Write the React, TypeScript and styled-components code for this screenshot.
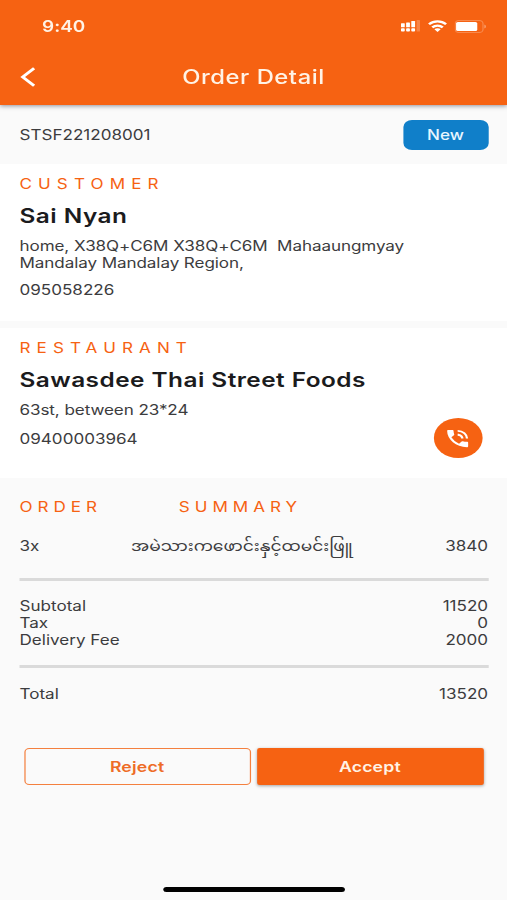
import React from "react";
import styled, { createGlobalStyle } from "styled-components";
import { MdPhoneInTalk } from "react-icons/md";

const ORANGE = "#f66212";

const GlobalStyle = createGlobalStyle`
  * { box-sizing: border-box; }
  html, body { margin: 0; background: #fafafa; overflow: hidden; }
`;

/* The phone canvas is laid out at 416px and widened to fill the viewport. */
const Viewport = styled.div`
  width: 507px;
  height: 900px;
  overflow: hidden;
`;

const Screen = styled.div`
  display: flex;
  flex-direction: column;
  width: 416px;
  height: 900px;
  transform: scaleX(1.21875);
  transform-origin: 0 0;
  background: #fafafa;
  color: #3c3c3e;
  font-family: Inter, "Noto Sans Myanmar", "Noto Sans", sans-serif;
  font-size: 14px;
  font-feature-settings: "calt" 0;
  line-height: 17px;
  white-space: pre;
`;

const Header = styled.header`
  flex: none;
  height: 105px;
  background: ${ORANGE};
  color: #fff3e6;
  box-shadow: 0 1px 4px rgba(40, 40, 60, 0.5);
  z-index: 1;
`;

const StatusBar = styled.div`
  display: flex;
  align-items: center;
  justify-content: space-between;
  height: 52px;
  padding: 0 17px 0 34.5px;
`;

const Time = styled.span`
  font-size: 15.5px;
  font-weight: 600;
`;

const StatusIcons = styled.div`
  display: flex;
  align-items: center;
  gap: 6px;
`;

const NavBar = styled.div`
  display: grid;
  grid-template-columns: 48px 1fr 48px;
  align-items: center;
  height: 50px;
`;

const BackButton = styled.button`
  display: flex;
  padding: 0 0 0 16px;
  border: 0;
  background: none;
  color: inherit;
`;

const Title = styled.h1`
  margin: 0;
  font-size: 19.5px;
  font-weight: 500;
  line-height: 24px;
  letter-spacing: 0.45px;
  text-align: center;
`;

const OrderBar = styled.div`
  display: flex;
  flex: none;
  align-items: center;
  justify-content: space-between;
  height: 59px;
  padding: 0 15.5px 0 16px;
`;

const StatusTag = styled.span`
  width: 70px;
  height: 30px;
  border-radius: 7px;
  background: #107fc9;
  color: #e8f6ff;
  font-weight: 500;
  line-height: 30px;
  text-align: center;
`;

const Party = styled.section<{ $height: number; $gap: number }>`
  display: flex;
  flex: none;
  flex-direction: column;
  height: ${(p) => p.$height}px;
  margin-bottom: ${(p) => p.$gap}px;
  padding: 11px 15.5px 0 16px;
  background: #fff;
`;

const Eyebrow = styled.h2<{ $tight?: boolean }>`
  margin: 0;
  color: ${ORANGE};
  font-size: 14px;
  font-weight: 400;
  line-height: 17px;
  letter-spacing: ${(p) => (p.$tight ? 4.1 : 5)}px;
  word-spacing: 54.9px;
`;

const Name = styled.h3`
  margin: 12px 0 9px;
  color: #1b1b1d;
  font-size: 20px;
  font-weight: 600;
  line-height: 24px;
  letter-spacing: 0.38px;
`;

const Line = styled.p`
  margin: 0;
  letter-spacing: -0.07px;
`;

const Contact = styled.div`
  display: flex;
  align-items: center;
  justify-content: space-between;
  height: 40px;
  padding-right: 5px;
`;

const PhoneLine = styled.p`
  margin: 10px 0 0;
`;

const CallButton = styled.button`
  display: grid;
  place-items: center;
  width: 40px;
  height: 40px;
  padding: 0;
  border: 0;
  border-radius: 50%;
  background: ${ORANGE};
  color: #fff;
`;

const Summary = styled.section`
  display: flex;
  flex-direction: column;
  padding: 20px 15.5px 0 16px;
`;

const ItemRow = styled.div`
  display: grid;
  grid-template-columns: 91.5px 1fr auto;
  align-items: center;
  height: 34px;
  margin: 13px 0 16px;
`;

const Divider = styled.hr`
  width: 100%;
  height: 3px;
  margin: 0;
  border: 0;
  background: #dadada;
`;

const Totals = styled.div<{ $top: number; $bottom: number }>`
  padding: ${(p) => p.$top}px 0 ${(p) => p.$bottom}px;
`;

const AmountRow = styled.div`
  display: flex;
  justify-content: space-between;
`;

const Actions = styled.div`
  display: flex;
  flex: none;
  gap: 5px;
  margin-top: 46px;
  padding: 0 19.5px;
`;

const ActionButton = styled.button<{ $filled?: boolean }>`
  flex: 1 1 50%;
  height: 37px;
  padding: 0;
  border: ${(p) => (p.$filled ? "0" : "1px solid #f4803f")};
  border-radius: ${(p) => (p.$filled ? 2 : 4)}px;
  background: ${(p) => (p.$filled ? ORANGE : "transparent")};
  box-shadow: ${(p) => (p.$filled ? "0 1px 3px rgba(0,0,0,.35)" : "none")};
  color: ${(p) => (p.$filled ? "#fff3e6" : "#ee6c26")};
  font: 600 14.5px/17px Inter, sans-serif;
  letter-spacing: 0.15px;
`;

const HomeIndicator = styled.div`
  flex: none;
  width: 149px;
  height: 5px;
  margin: auto auto 8px;
  border-radius: 3px;
  background: #000;
`;

const Signal = () => (
  <svg width="16" height="12" viewBox="0 0 17 12" fill="#fff" preserveAspectRatio="none">
    <rect x="0" y="3.3" width="3.3" height="4" rx=".5" />
    <rect x="0" y="8.3" width="3.3" height="3.3" rx=".8" />
    <rect x="4.5" y="2.4" width="3.3" height="4.9" rx=".5" />
    <rect x="4.5" y="8.3" width="3.3" height="3.3" rx=".8" />
    <rect x="9" y="1" width="3.3" height="6.3" rx=".5" />
    <rect x="9" y="8.3" width="3.3" height="3.3" rx=".8" />
    <rect x="13.6" y="0" width="3" height="11.5" rx=".6" opacity=".22" />
  </svg>
);

const Wifi = () => (
  <svg width="16" height="12" viewBox="0 0 16 12" fill="none" stroke="#fff" strokeWidth="2.2">
    <path d="M1 4.2C5 .4 11 .4 15 4.2" />
    <path d="M3.700 7.400c2.500-2.500 6.100-2.500 8.600 0" />
    <path d="M8 11.900 5.400 9.300c1.400-1.300 3.800-1.300 5.200 0z" fill="#fff" stroke="none" />
  </svg>
);

const Battery = () => (
  <svg width="26" height="13" viewBox="0 0 26 13">
    <rect x=".5" y=".5" width="22.800" height="12" rx="3" fill="none" stroke="#fff" opacity=".25" />
    <rect x="1.200" y="2" width="17.400" height="9" rx="1.500" fill="#fff" />
    <path d="M24.500 4.500c1.500.6 1.500 3.400 0 4z" fill="#fff" opacity=".45" />
  </svg>
);

const Back = () => (
  <svg width="14" height="20" viewBox="0 0 14 20" fill="none" stroke="#fff" strokeWidth="2.600">
    <path d="M12 1.200 2.600 10l9.400 8.800" />
  </svg>
);

const amounts = [
  ["Subtotal", "11520"],
  ["Tax", "0"],
  ["Delivery Fee", "2000"],
];

export default function App() {
  return (
    <Viewport>
      <GlobalStyle />
      <Screen>
        <Header>
          <StatusBar>
            <Time>9:40</Time>
            <StatusIcons>
              <Signal />
              <Wifi />
              <Battery />
            </StatusIcons>
          </StatusBar>
          <NavBar>
            <BackButton aria-label="Back">
              <Back />
            </BackButton>
            <Title>Order Detail</Title>
          </NavBar>
        </Header>

        <OrderBar>
          <span>STSF221208001</span>
          <StatusTag>New</StatusTag>
        </OrderBar>

        <Party $height={157} $gap={7}>
          <Eyebrow>CUSTOMER</Eyebrow>
          <Name>Sai Nyan</Name>
          <Line>{"home, X38Q+C6M X38Q+C6M  Mahaaungmyay\nMandalay Mandalay Region,"}</Line>
          <PhoneLine>095058226</PhoneLine>
        </Party>

        <Party $height={150} $gap={0}>
          <Eyebrow>RESTAURANT</Eyebrow>
          <Name>Sawasdee Thai Street Foods</Name>
          <Line>63st, between 23*24</Line>
          <Contact>
            <span>09400003964</span>
            <CallButton aria-label="Call">
              <MdPhoneInTalk size={23} />
            </CallButton>
          </Contact>
        </Party>

        <Summary>
          <Eyebrow $tight>ORDER SUMMARY</Eyebrow>
          <ItemRow>
            <span>3x</span>
            <span>အမဲသားကဖောင်းနှင့်ထမင်းဖြူ</span>
            <span>3840</span>
          </ItemRow>
          <Divider />
          <Totals $top={16} $bottom={17}>
            {amounts.map(([label, value]) => (
              <AmountRow key={label}>
                <span>{label}</span>
                <span>{value}</span>
              </AmountRow>
            ))}
          </Totals>
          <Divider />
          <Totals $top={17} $bottom={0}>
            <AmountRow>
              <span>Total</span>
              <span>13520</span>
            </AmountRow>
          </Totals>
        </Summary>

        <Actions>
          <ActionButton>Reject</ActionButton>
          <ActionButton $filled>Accept</ActionButton>
        </Actions>
        <HomeIndicator />
      </Screen>
    </Viewport>
  );
}
